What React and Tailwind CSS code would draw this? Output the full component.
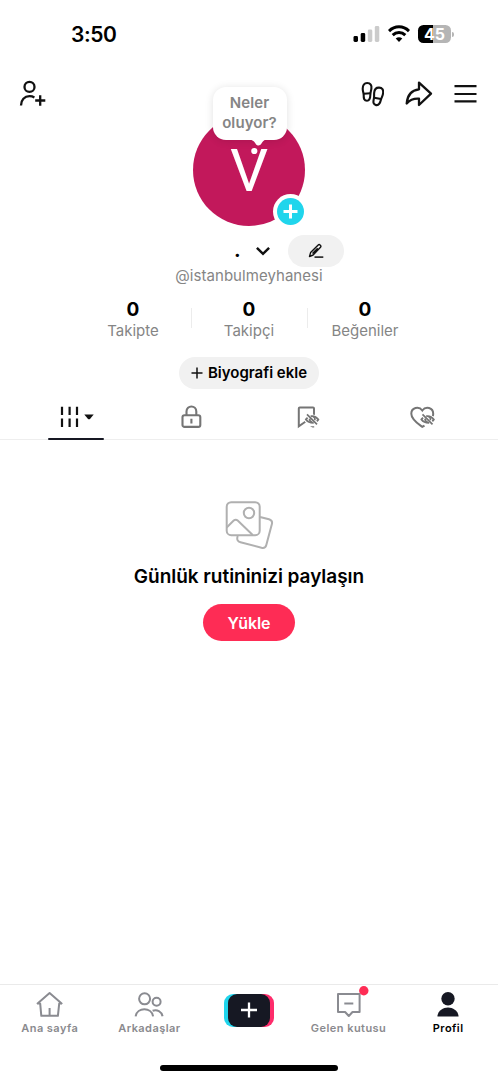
const font = 'font-[Inter,"Liberation_Sans",sans-serif]'

function StatusBar() {
  return (
    <div className="flex h-[68px] items-center justify-between pl-[71px] pr-[44px]">
      <span className="pt-px text-[21px] font-semibold tracking-[-0.4px]">3:50</span>
      <div className="flex items-center gap-[8px]">
        <svg className="h-[18px] w-[27px]" viewBox="0 0 27 18">
          <rect x="0.5" y="11" width="4.5" height="6" rx="1.4" />
          <rect x="7.7" y="8" width="4.5" height="9" rx="1.4" />
          <rect x="14.8" y="4.6" width="4.5" height="12.4" rx="1.4" fill="#cbcbcb" />
          <rect x="21.8" y="1" width="4.5" height="16" rx="1.4" fill="#cbcbcb" />
        </svg>
        <svg className="h-[18px] w-[22px]" viewBox="0 0 22 18" fill="none" stroke="#000" strokeWidth="3">
          <path d="M1 6.1C6.7 .4 15.3 .4 21 6.1" />
          <path d="M4.7 10.1C8.3 6.6 13.7 6.6 17.3 10.1" />
          <path d="M11 16.9L7.7 13.5C9.7 11.8 12.3 11.8 14.3 13.5Z" fill="#000" stroke="none" />
        </svg>
        <div className="flex items-center gap-px">
          <div className="flex h-[18px] w-[33px] items-center justify-center rounded-[5.5px] bg-[linear-gradient(90deg,#000_45%,#b5b5b5_45%)] text-[16px] leading-none font-bold text-white">45</div>
          <div className="h-[5px] w-[2px] rounded-r-full bg-[#b5b5b5]" />
        </div>
      </div>
    </div>
  )
}

function Header() {
  return (
    <div className="flex h-[52px] items-center justify-between pl-[19px] pr-[20px]">
      <svg className="h-[28px] w-[28px]" viewBox="0 0 28 28" fill="none" stroke="#111" strokeWidth="2.3">
        <circle cx="10.5" cy="6.900" r="5" />
        <path d="M2 25.500C2 20 5.5 16.200 10.5 16.200C12.5 16.200 14.1 16.700 15.4 17.500M16.2 20.500H26.3M21.2 15.300V25.700" />
      </svg>
      <div className="flex items-center gap-[21px]">
        <svg className="h-[26px] w-[23px]" viewBox="0 0 23 26" fill="none" stroke="#111" strokeWidth="2.1" strokeLinejoin="round">
          <path d="M6.2 2C9.6 2 10.8 4.4 10.4 7.3C10.1 9.8 9.5 10.9 9.4 13.3C9.3 17.3 8.7 19.8 6 19.8C3.2 19.8 2.6 17.6 2.7 14.3C2.7 12 1.7 10.5 1.7 7.7C1.7 4.2 3.2 2 6.2 2Z" />
          <path d="M2.800 12.7L9.4 12.2" />
          <path d="M18.1 6.6C21.300 6.7 22.500 9 22.1 12C21.8 15 20.6 16.2 20 18.6C19.2 22.1 17.9 24.7 15.1 24.1C12.1 23.5 12.1 21.2 12.8 17.9C13.4 15.5 12.9 13.9 13.200 11.6C13.5 8.5 15.2 6.5 18.1 6.6Z" />
          <path d="M13.1 16.7L20.1 18" />
        </svg>
        <svg className="h-[28px] w-[28px]" viewBox="0 0 28 28" fill="none" stroke="#111" strokeWidth="2.3" strokeLinejoin="round">
          <path d="M14 2.600L26 13.7L14 25V18.7C8.5 18.3 4.800 20 1.700 23.5C2.3 15.2 6.1 10.2 14 9.3Z" />
        </svg>
        <svg className="h-[20px] w-[24px]" viewBox="0 0 24 20" stroke="#111" strokeWidth="2.2">
          <path d="M.5 2.200H22.500M.5 10H22.500M.5 17.300H22.500" />
        </svg>
      </div>
    </div>
  )
}

function Avatar() {
  return (
    <div className="relative mx-auto -mt-[6px] flex h-[112px] w-[112px] items-center justify-center rounded-full bg-[#c2185b]">
      <span className="pt-px font-[Roboto] text-[60px] leading-none text-white">V</span>
      <div className="absolute -top-[27px] left-[19.5px] flex h-[53px] w-[74px] items-center justify-center rounded-[13px] bg-white pb-px text-center text-[15px] leading-[20px] font-semibold tracking-[0.1px] text-[#858585] shadow-[0_1px_8px_rgba(0,0,0,0.12)]">
        Neler<br />oluyor?
      </div>
      <svg className="absolute top-[25px] left-[58px] h-[16px] w-[16px]" viewBox="0 0 16 16" fill="#fff">
        <path d="M.5 0H15C12.5 1.5 11.3 3 10.3 4.8C9 7 6 7 4.8 5C3.8 3.2 2.5 1.5 .5 .9Z" />
        <circle cx="3.3" cy="12" r="3.1" />
      </svg>
      <div className="absolute top-[80px] left-[80px] h-[35px] w-[35px] rounded-full bg-white p-[4px]">
        <svg className="h-[27px] w-[27px] rounded-full bg-[#20d5ec]" viewBox="0 0 27 27" stroke="#fff" strokeWidth="3">
          <path d="M6.5 13.5H20.5M13.5 6.5V20.5" />
        </svg>
      </div>
    </div>
  )
}

function NameRow() {
  return (
    <div className="mt-[9px] flex h-[32px] items-center pl-[234px]">
      <span className="w-[22px] -translate-y-px text-[20px] font-bold">.</span>
      <svg className="h-[10px] w-[14px]" viewBox="0 0 14 10" fill="none" stroke="#111" strokeWidth="2.5">
        <path d="M.9 1.8L7 7.8L13.1 1.8" />
      </svg>
      <button className="ml-[18px] flex h-[32px] w-[56px] items-center justify-center rounded-full bg-[#f1f1f1]">
        <svg className="h-[16px] w-[16px]" viewBox="0 0 16 16" fill="none" stroke="#111" strokeWidth="1.4" strokeLinejoin="round">
          <path d="M1.5 13.5L2.600 9.600L10.200 2C11.500 .800 13.700 2.900 12.500 4.300L5.100 12ZM4.500 10.600L9.700 5.200" />
          <path d="M6.500 14.100H15.300" strokeWidth="1.5" />
        </svg>
      </button>
    </div>
  )
}

const stats = [
  { label: 'Takipte', value: 0 },
  { label: 'Takipçi', value: 0 },
  { label: 'Beğeniler', value: 0 },
]

function Stats() {
  return (
    <div className="mx-auto mt-[14px] flex w-[348px]">
      {stats.map((s, i) => (
        <div key={s.label} className="flex w-[116px]">
          <div className={i > 0 ? 'mt-[8px] h-[20px] w-px bg-[#ececec]' : 'w-px'} />
          <div className="flex-1 pr-px text-center">
            <div className="text-[19px] leading-[20px] font-bold">{s.value}</div>
            <div className="text-[15px] leading-[21px] text-[#858585]">{s.label}</div>
          </div>
        </div>
      ))}
    </div>
  )
}

// crossed-out eye laid over the corner of the saved / liked icons
function HiddenEye() {
  return (
    <>
      <path d="M9 14.5C12 10.500 18 10 21.500 14.500C18.500 18 12.500 18.500 9 14.500ZM10 9.500L20 19.500" fill="#fff" stroke="#fff" strokeWidth="3.6" />
      <path d="M14 11.200C17.500 10.700 20 12.200 21.600 14.500C21.200 15.200 20.700 15.700 20.100 16.200M17 17.900C13.700 18 11 16.900 9.200 14.500C9.600 13.800 10.200 13.200 10.900 12.700" strokeWidth="1.9" />
      <path d="M10.300 9.300L20.300 19.300M16.300 11.500C18.300 12.300 18.500 14 18 15.200M12.800 13.700C12.800 15.500 13.800 16.700 15.500 17.200" strokeWidth="1.7" />
    </>
  )
}

function Tabs() {
  return (
    <div className="mt-[6px] flex h-[45px] border-b border-[#eeeeee] pl-[18px] pr-[18px]">
      <div className="relative flex flex-1 items-center justify-center">
        <svg className="h-[22px] w-[36px]" viewBox="0 0 36 22" fill="none" stroke="#111" strokeWidth="2.2">
          <path d="M4 .7V9M11.6 .7V9M19 .7V9M4 12.500V21M11.6 12.500V21M19 12.500V21" />
          <path d="M26.300 8.5H35.700L32 12.900Q31 13.800 30 12.900Z" fill="#111" stroke="none" />
        </svg>
        <div className="absolute -bottom-px left-1/2 h-[2.5px] w-[56px] -translate-x-1/2 rounded-full bg-[#161823]" />
      </div>
      <div className="flex flex-1 items-center justify-center">
        <svg className="h-[24px] w-[22px]" viewBox="0 0 22 24" fill="none" stroke="#757575" strokeWidth="2.1">
          <rect x="2.5" y="10.2" width="17.8" height="11.7" rx="2" />
          <path d="M6.5 10V6.5C6.5 -.2 16.3 -.2 16.3 6.5V10M11.4 13.7V18.5" />
        </svg>
      </div>
      <div className="flex flex-1 items-center justify-center">
        <svg className="h-[23px] w-[22px] overflow-visible" viewBox="0 0 22 23" fill="none" stroke="#757575" strokeWidth="2">
          <path d="M18 10V2.5C18 1.8 17.6 1.500 17 1.500H3.800C3.200 1.500 2.800 1.8 2.800 2.5V20.300L9.300 15.800" />
          <g transform="translate(.7 -1)"><HiddenEye /></g>
          <path d="M14 20.300H18.200V21.500H16.500Z" fill="#757575" stroke="none" />
        </svg>
      </div>
      <div className="flex flex-1 items-center justify-center">
        <svg className="h-[23px] w-[25px] overflow-visible" viewBox="0 0 25 23" fill="none" stroke="#757575" strokeWidth="2">
          <path d="M14.5 19.6L12.3 20.9C8 17.7 1.3 13.5 1.3 7.7C1.3 1.7 8.8 -.2 12.3 4.5C15.8 -.2 23.2 1.7 23.2 7.7C23.2 8.700 23 9.400 22.800 10.200" />
          <g transform="translate(2.2 -1)"><HiddenEye /></g>
        </svg>
      </div>
    </div>
  )
}

function EmptyState() {
  return (
    <div className="flex flex-1 flex-col items-center pt-[60px]">
      <svg className="h-[51px] w-[50px]" viewBox="0 0 50 51" fill="none" stroke="#b0b0b0" strokeWidth="2">
        <rect x="2.7" y="2.2" width="33" height="33" rx="4.5" />
        <circle cx="25" cy="13" r="5.2" />
        <path d="M2.7 27.5L9.7 20.6Q11.7 18.8 13.7 20.6L28.7 35" />
        <path d="M36 17L45 19.3Q48.8 20.5 47.9 24L42.3 45Q41.3 48.7 37.5 47.8L16.500 42.2Q12 41 13.7 36" />
      </svg>
      <h1 className="mt-[13px] text-[19px] leading-[26px] font-semibold tracking-[-0.03px] whitespace-nowrap">Günlük rutininizi paylaşın</h1>
      <button className="mt-[14px] h-[37px] w-[92px] rounded-full bg-[#fe2c55] text-[16px] font-semibold tracking-[-0.1px] text-white">Yükle</button>
    </div>
  )
}

function NavItem({ label, active, children }) {
  return (
    <div className="flex flex-1 flex-col items-center">
      <svg className="h-[28px] w-[30px] overflow-visible" viewBox="0 0 30 28" fill="none" stroke="#8a8b91" strokeWidth="2">{children}</svg>
      <span className={`text-[11px] leading-[17px] font-semibold tracking-[0.45px] whitespace-nowrap ${active ? 'text-black' : 'text-[#8a8a8e]'}`}>{label}</span>
    </div>
  )
}

function BottomNav() {
  return (
    <div className="flex h-[81px] border-t border-[#eaeaea] pt-[7px]">
      <NavItem label="Ana sayfa">
        <path d="M2 12L14.6 1L27.2 12M2.2 11.600H5.2L6.3 23.800H22.9L24.2 11.600H27M14.6 16V24" strokeLinejoin="round" />
      </NavItem>
      <NavItem label="Arkadaşlar">
        <circle cx="10.6" cy="6.800" r="5.5" />
        <circle cx="22.6" cy="9.800" r="4" />
        <path d="M1.6 24.3C3.1 15 17.6 15 19.1 24.3M18.600 18.7C23.1 17 27.6 19.500 28.6 24.3" />
      </NavItem>
      <div className="flex flex-1 justify-center">
        <div className="mt-[2px] flex h-[33px] w-[50px] justify-center rounded-[9px] bg-[linear-gradient(90deg,#20d5ec_50%,#fe2c6b_50%)]">
          <svg className="h-[33px] w-[42px] rounded-[9px] bg-[#161823]" viewBox="0 0 42 33" stroke="#fff" strokeWidth="2.3">
            <path d="M13 16H29M21 8.5V23.5" />
          </svg>
        </div>
      </div>
      <NavItem label="Gelen kutusu">
        <path d="M4 2H25.6V20H18.5L14.8 24L11.1 20H4ZM10.3 11.5H19.3" strokeLinejoin="round" />
        <circle cx="29.800" cy="-1.2" r="4.7" fill="#fe2c55" stroke="none" />
      </NavItem>
      <NavItem label="Profil" active>
        <circle cx="15" cy="6.7" r="6.7" fill="#161823" stroke="none" />
        <path d="M4.400 24C6.2 12.5 23.8 12.5 25.6 24Q25.6 24.5 25 24.5H5Q4.4 24.5 4.400 24Z" fill="#161823" stroke="none" />
      </NavItem>
    </div>
  )
}

export default function App() {
  return (
    <div className={`flex h-[1080px] w-[498px] flex-col overflow-hidden bg-white text-black ${font}`}>
      <StatusBar />
      <Header />
      <Avatar />
      <NameRow />
      <div className="h-[19px] text-center text-[15px] leading-[18px] tracking-[0.05px] text-[#858585]">@istanbulmeyhanesi</div>
      <Stats />
      <button className="mx-auto mt-[16px] flex h-[32px] w-[140px] items-center justify-center gap-[5px] rounded-full bg-[#f1f1f1] text-[15px] font-semibold whitespace-nowrap">
        <svg className="h-[12px] w-[12px] shrink-0" viewBox="0 0 12 12" stroke="#111" strokeWidth="1.5"><path d="M.5 6H11.5M6 .5V11.5" /></svg>
        Biyografi ekle
      </button>
      <Tabs />
      <EmptyState />
      <BottomNav />
      <div className="mx-auto mb-[9px] h-[6px] w-[178px] shrink-0 rounded-full bg-black" />
    </div>
  )
}
